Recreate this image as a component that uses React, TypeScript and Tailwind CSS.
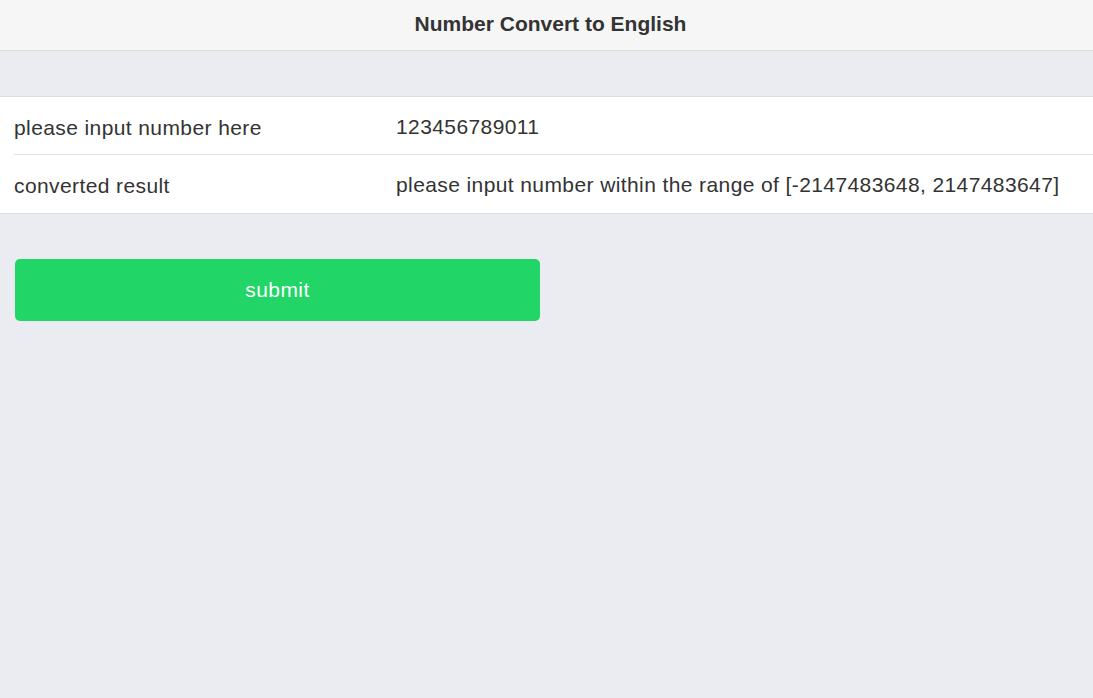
import React, { useState } from 'react';

export default function App() {
    const [value] = useState("123456789011");
    const result = "please input number within the range of [-2147483648, 2147483647]";

    return (
        <div className="min-h-[698px] bg-[#ebecf1] text-[#333333]" style={{ fontFamily: '"Liberation Sans", Arial, sans-serif' }}>
            <div className="h-[51px] bg-[#f6f6f6] border-b border-[#dcdcdc] flex items-center justify-center pl-[8px]">
                <h1 className="text-[21px] font-bold text-[#333333] pb-[2px]">Number Convert to English</h1>
            </div>

            <div className="mt-[45px] bg-white border-t border-b border-[#dedede] pl-[14px]">
                <div className="flex items-center h-[58px] border-b border-[#e3e3e3]">
                    <div className="w-[382px] text-[21px] tracking-[0.4px] pt-[4px]">please input number here</div>
                    <div className="text-[21px] tracking-[0.4px] pt-[2px]">{value}</div>
                </div>
                <div className="flex items-center h-[58px]">
                    <div className="w-[382px] text-[21px] tracking-[0.4px] pt-[4px]">converted result</div>
                    <div className="text-[21px] tracking-[0.4px] pt-[2px]">{result}</div>
                </div>
            </div>

            <div className="px-[15px] pt-[45px]">
                <button className="w-[525px] h-[62px] rounded-[5px] bg-[#21d567] text-white text-[21px] tracking-[0.4px] flex items-center justify-center">
                    submit
                </button>
            </div>
        </div>
    );
}
